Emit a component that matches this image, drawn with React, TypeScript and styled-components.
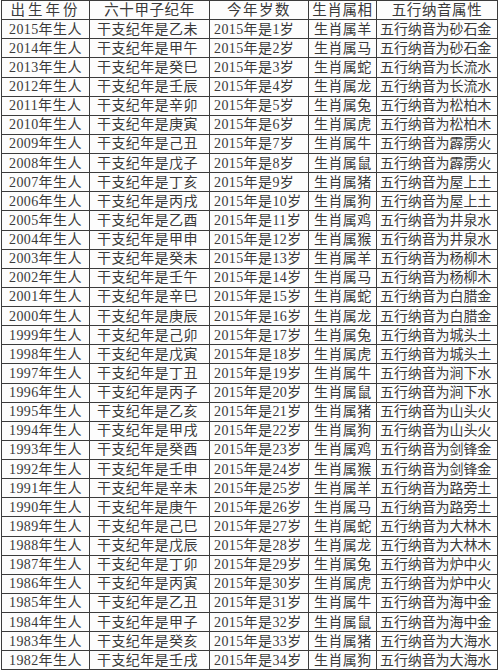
import React from 'react';
import styled, { createGlobalStyle } from 'styled-components';

const GlobalStyle = createGlobalStyle`
  html, body {
    margin: 0;
    padding: 0;
    background: #d9d9d9;
  }
`;

const Page = styled.div`
  width: 500px;
  height: 672px;
  background: #ffffff;
  padding: 0 0 0 1px;
  box-sizing: border-box;
`;

const Table = styled.table`
  border-collapse: collapse;
  table-layout: fixed;
  width: 497px;
  font-family: 'Liberation Serif', 'Noto Sans CJK SC', serif;
  font-size: 14px;
  color: #3a3a3a;
  background: #fdfdfd;
`;

const Row = styled.tr`
  height: 19.14px;
`;

const Cell = styled.td<{ $pad: number; $spacing?: number }>`
  border: 1px solid #3c3c3c;
  padding: 0 0 0 ${(p) => p.$pad}px;
  line-height: 17px;
  white-space: nowrap;
  overflow: hidden;
  text-align: left;
  letter-spacing: ${(p) => p.$spacing ?? 0.4}px;
`;

const HeadCell = styled.th<{ $spacing?: number }>`
  border: 1px solid #3c3c3c;
  padding: 0;
  font-weight: normal;
  font-size: 14.5px;
  line-height: 17px;
  text-align: center;
  letter-spacing: ${(p) => p.$spacing ?? 0.6}px;
  white-space: nowrap;
`;

const widths = [88, 120, 99, 68, 121];

const rows: [string, string, string][] = [
  ['乙未', '羊', '砂石金'],
  ['甲午', '马', '砂石金'],
  ['癸巳', '蛇', '长流水'],
  ['壬辰', '龙', '长流水'],
  ['辛卯', '兔', '松柏木'],
  ['庚寅', '虎', '松柏木'],
  ['己丑', '牛', '霹雳火'],
  ['戊子', '鼠', '霹雳火'],
  ['丁亥', '猪', '屋上土'],
  ['丙戌', '狗', '屋上土'],
  ['乙酉', '鸡', '井泉水'],
  ['甲申', '猴', '井泉水'],
  ['癸未', '羊', '杨柳木'],
  ['壬午', '马', '杨柳木'],
  ['辛巳', '蛇', '白腊金'],
  ['庚辰', '龙', '白腊金'],
  ['己卯', '兔', '城头土'],
  ['戊寅', '虎', '城头土'],
  ['丁丑', '牛', '涧下水'],
  ['丙子', '鼠', '涧下水'],
  ['乙亥', '猪', '山头火'],
  ['甲戌', '狗', '山头火'],
  ['癸酉', '鸡', '剑锋金'],
  ['壬申', '猴', '剑锋金'],
  ['辛未', '羊', '路旁土'],
  ['庚午', '马', '路旁土'],
  ['己巳', '蛇', '大林木'],
  ['戊辰', '龙', '大林木'],
  ['丁卯', '兔', '炉中火'],
  ['丙寅', '虎', '炉中火'],
  ['乙丑', '牛', '海中金'],
  ['甲子', '鼠', '海中金'],
  ['癸亥', '猪', '大海水'],
  ['壬戌', '狗', '大海水'],
];

const App = (): JSX.Element => {
  return (
    <Page>
      <GlobalStyle />
      <Table>
        <colgroup>
          {widths.map((w, i) => (
            <col key={i} style={{ width: w }} />
          ))}
        </colgroup>
        <thead>
          <Row>
            <HeadCell $spacing={3}>出生年份</HeadCell>
            <HeadCell>六十甲子纪年</HeadCell>
            <HeadCell $spacing={1.5}>今年岁数</HeadCell>
            <HeadCell>生肖属相</HeadCell>
            <HeadCell>五行纳音属性</HeadCell>
          </Row>
        </thead>
        <tbody>
          {rows.map(([gz, sx, ny], i) => (
            <Row key={i}>
              <Cell $pad={7}>{2015 - i}年生人</Cell>
              <Cell $pad={7}>干支纪年是{gz}</Cell>
              <Cell $pad={4}>2015年是{i + 1}岁</Cell>
              <Cell $pad={5}>生肖属{sx}</Cell>
              <Cell $pad={3} $spacing={-0.1}>五行纳音为{ny}</Cell>
            </Row>
          ))}
        </tbody>
      </Table>
    </Page>
  );
};

export default App;
